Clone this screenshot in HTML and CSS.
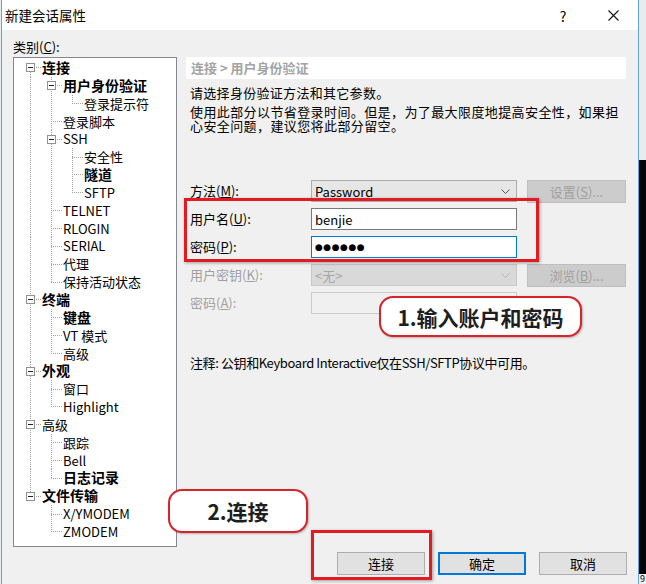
FILE: index.html
```html
<!DOCTYPE html>
<html lang="zh-CN">
<head>
    <meta charset="UTF-8">
    <title>新建会话属性</title>
    <link rel="stylesheet" href="styles.css">
</head>
<body>
<div class="screen">
    <div class="window">
        <div class="titlebar">
            <span class="title">新建会话属性</span>
            <span class="tb-btn">?</span>
            <span class="tb-btn">
                <svg width="11" height="11" viewBox="0 0 11 11"><path d="M0.5 0.5 L10.5 10.5 M10.5 0.5 L0.5 10.5" stroke="#111" stroke-width="1.1" fill="none"/></svg>
            </span>
        </div>

        <div class="body">
            <div class="main">
                <div class="left">
                    <div class="cat-label">类别(<u>C</u>):</div>
                    <div class="tree">
                        <div class="row"><i class="c first"><b class="pm"></b></i><span class="t b">连接</span></div>
                        <div class="row"><i class="c v"></i><i class="c mid"><b class="pm"></b></i><span class="t b">用户身份验证</span></div>
                        <div class="row"><i class="c v"></i><i class="c v"></i><i class="c end"></i><span class="t">登录提示符</span></div>
                        <div class="row"><i class="c v"></i><i class="c mid"></i><span class="t">登录脚本</span></div>
                        <div class="row"><i class="c v"></i><i class="c mid"><b class="pm"></b></i><span class="t">SSH</span></div>
                        <div class="row"><i class="c v"></i><i class="c v"></i><i class="c mid"></i><span class="t">安全性</span></div>
                        <div class="row"><i class="c v"></i><i class="c v"></i><i class="c mid"></i><span class="t b">隧道</span></div>
                        <div class="row"><i class="c v"></i><i class="c v"></i><i class="c end"></i><span class="t">SFTP</span></div>
                        <div class="row"><i class="c v"></i><i class="c mid"></i><span class="t">TELNET</span></div>
                        <div class="row"><i class="c v"></i><i class="c mid"></i><span class="t">RLOGIN</span></div>
                        <div class="row"><i class="c v"></i><i class="c mid"></i><span class="t">SERIAL</span></div>
                        <div class="row"><i class="c v"></i><i class="c mid"></i><span class="t">代理</span></div>
                        <div class="row"><i class="c v"></i><i class="c end"></i><span class="t">保持活动状态</span></div>
                        <div class="row"><i class="c mid"><b class="pm"></b></i><span class="t b">终端</span></div>
                        <div class="row"><i class="c v"></i><i class="c mid"></i><span class="t b">键盘</span></div>
                        <div class="row"><i class="c v"></i><i class="c mid"></i><span class="t">VT 模式</span></div>
                        <div class="row"><i class="c v"></i><i class="c end"></i><span class="t">高级</span></div>
                        <div class="row"><i class="c mid"><b class="pm"></b></i><span class="t b">外观</span></div>
                        <div class="row"><i class="c v"></i><i class="c mid"></i><span class="t">窗口</span></div>
                        <div class="row"><i class="c v"></i><i class="c end"></i><span class="t">Highlight</span></div>
                        <div class="row"><i class="c mid"><b class="pm"></b></i><span class="t">高级</span></div>
                        <div class="row"><i class="c v"></i><i class="c mid"></i><span class="t">跟踪</span></div>
                        <div class="row"><i class="c v"></i><i class="c mid"></i><span class="t">Bell</span></div>
                        <div class="row"><i class="c v"></i><i class="c end"></i><span class="t b">日志记录</span></div>
                        <div class="row"><i class="c end"><b class="pm"></b></i><span class="t b">文件传输</span></div>
                        <div class="row"><i class="c"></i><i class="c mid"></i><span class="t">X/YMODEM</span></div>
                        <div class="row"><i class="c"></i><i class="c end"></i><span class="t">ZMODEM</span></div>
                    </div>
                </div>

                <div class="right">
                    <div class="crumb">连接 &gt; 用户身份验证</div>
                    <p class="desc">请选择身份验证方法和其它参数。</p>
                    <p class="desc2">使用此部分以节省登录时间。但是，为了最大限度地提高安全性，如果担<br>心安全问题，建议您将此部分留空。</p>

                    <div class="form">
                        <label>方法(<u>M</u>):</label>
                        <div class="select">Password<svg width="9" height="5" viewBox="0 0 9 5"><path d="M0.5 0.5 L4.5 4.5 L8.5 0.5" stroke="#555" fill="none"/></svg></div>
                        <button class="btn-off">设置(<u>S</u>)...</button>

                        <label>用户名(<u>U</u>):</label>
                        <div class="input">benjie</div>
                        <span></span>

                        <label>密码(<u>P</u>):</label>
                        <div class="input focus"><span class="dots">●●●●●●</span></div>
                        <span></span>

                        <label class="off">用户密钥(<u>K</u>):</label>
                        <div class="select off">&lt;无&gt;<svg width="9" height="5" viewBox="0 0 9 5"><path d="M0.5 0.5 L4.5 4.5 L8.5 0.5" stroke="#b5b5b5" fill="none"/></svg></div>
                        <button class="btn-off">浏览(<u>B</u>)...</button>

                        <label class="off">密码(<u>A</u>):</label>
                        <div class="input off"></div>
                        <span></span>
                    </div>

                    <p class="note">注释: 公钥和Keyboard Interactive仅在SSH/SFTP协议中可用。</p>
                </div>
            </div>

            <div class="footer">
                <button class="btn">连接</button>
                <button class="btn default">确定</button>
                <button class="btn">取消</button>
            </div>
        </div>

        <!-- annotations drawn over the dialog -->
        <div class="mark mark-form"></div>
        <div class="callout callout-1">1.输入账户和密码</div>
        <div class="callout callout-2">2.连接</div>
        <div class="mark mark-connect"></div>
    </div>

    <div class="outside">
        <div class="o-top"></div>
        <div class="o-black"></div>
        <div class="o-bottom">9</div>
    </div>
</div>
</body>
</html>
```

FILE: styles.css
```css
/* 全体 */
html, body {
    margin: 0;
    padding: 0;
}
body {
    width: 646px;
    height: 584px;
    overflow: hidden;
    background-color: #e4ebf1;
    font-family: "Noto Sans CJK SC", sans-serif;
    font-size: 13px;
    color: #000;
}
.screen {
    display: flex;
    height: 584px;
    padding-left: 1px;
}

/* ダイアログ */
.window {
    position: relative;
    width: 636px;
    display: flex;
    flex-direction: column;
    border-left: 1px solid #5ea6dc;
    border-right: 1px solid #5ea6dc;
    background-color: #f0f0f0;
}
.titlebar {
    display: flex;
    align-items: center;
    height: 30px;
    flex: none;
    background-color: #ffffff;
}
.title {
    padding-left: 3px;
    font-size: 13.5px;
    margin-right: auto;
}
.tb-btn {
    width: 50px;
    height: 30px;
    display: flex;
    align-items: center;
    justify-content: center;
    font-size: 14px;
    padding-top: 1px;
    box-sizing: border-box;
}

.body {
    flex: 1;
    display: flex;
    flex-direction: column;
}
.main {
    display: flex;
    gap: 9px;
    padding: 8px 12px 0 11px;
}

/* 左：カテゴリツリー */
.left {
    width: 164px;
    flex: none;
}
.cat-label {
    height: 19px;
    line-height: 17px;
}
.tree {
    height: 490px;
    box-sizing: border-box;
    border: 1px solid #828790;
    background-color: #ffffff;
    padding: 1px 0 0 6px;
    --dot-v: repeating-linear-gradient(to bottom, #a0a0a0 0 1px, transparent 1px 2px);
    --dot-h: repeating-linear-gradient(to right, #a0a0a0 0 1px, transparent 1px 2px);
}
.row {
    display: flex;
    align-items: center;
    height: 17.85px;
    line-height: 17.85px;
    white-space: nowrap;
}
.c {
    width: 21px;
    flex: none;
    align-self: stretch;
    display: flex;
    align-items: center;
    justify-content: center;
}
.c.v {
    background: var(--dot-v) 10px 0 / 1px 100% no-repeat;
}
.c.mid {
    background: var(--dot-h) 10px 50% / 11px 1px no-repeat,
                var(--dot-v) 10px 0 / 1px 100% no-repeat;
}
.c.end {
    background: var(--dot-h) 10px 50% / 11px 1px no-repeat,
                var(--dot-v) 10px 0 / 1px 50% no-repeat;
}
.c.first {
    background: var(--dot-h) 10px 50% / 11px 1px no-repeat,
                var(--dot-v) 10px 100% / 1px 50% no-repeat;
}
.pm {
    width: 9px;
    height: 9px;
    box-sizing: border-box;
    border: 1px solid #919191;
    background: linear-gradient(#222, #222) center / 5px 1px no-repeat, #ffffff;
}
.t {
    margin-left: 1px;
}
.t.b {
    font-weight: bold;
    font-size: 14px;
}

/* 右：設定パネル */
.right {
    width: 440px;
    flex: none;
}
.crumb {
    margin-top: 19px;
    height: 22px;
    line-height: 22px;
    padding-left: 5px;
    background-color: #ffffff;
    color: #a3a3a3;
    font-weight: bold;
}
.desc {
    margin: 6px 0 0;
    padding-left: 4px;
    line-height: 16px;
    letter-spacing: 0.3px;
}
.desc2 {
    margin: 4px 0 0;
    padding-left: 4px;
    line-height: 14px;
    letter-spacing: 0.4px;
}
.form {
    margin-top: 47px;
    padding-left: 4px;
    display: grid;
    grid-template-columns: 111px 206px 99px;
    column-gap: 10px;
    row-gap: 6px;
    grid-auto-rows: 22px;
    align-items: center;
}
.form label {
    line-height: 16px;
}
.form label.off {
    color: #a0a0a0;
}
.select, .input {
    height: 22px;
    box-sizing: border-box;
    display: flex;
    align-items: center;
    padding-left: 3px;
}
.select {
    justify-content: space-between;
    padding-right: 6px;
    border: 1px solid #acacac;
    background-color: #e6e6e6;
}
.select.off {
    border-color: #c8c8c8;
    background-color: #d9d9d9;
    color: #a6a6a6;
}
.input {
    border: 1px solid #7a7a7a;
    background-color: #ffffff;
}
.input.focus {
    border-color: #0078d7;
}
.input.off {
    border-color: #cccccc;
    background-color: #f0f0f0;
}
.dots {
    font-family: "DejaVu Sans", sans-serif;
    font-size: 9px;
    letter-spacing: 0.5px;
}
.btn-off {
    height: 23px;
    align-self: start;
    font-family: inherit;
    font-size: 13px;
    color: #a0a0a0;
    background-color: #cccccc;
    border: 1px solid #bfbfbf;
    padding: 0;
}
.note {
    margin: 41px 0 0;
    padding-left: 4px;
    line-height: 16px;
    letter-spacing: -0.4px;
}

/* 下部ボタン */
.footer {
    display: flex;
    justify-content: flex-end;
    gap: 13px;
    padding: 5px 11px 0 0;
}
.btn {
    width: 88px;
    height: 23px;
    box-sizing: border-box;
    font-family: inherit;
    font-size: 13px;
    color: #000;
    background-color: #e1e1e1;
    border: 1px solid #adadad;
    padding: 0;
}
.btn.default {
    border: 2px solid #0078d7;
}

/* 注釈（赤枠と吹き出し） */
.mark {
    position: absolute;
    box-sizing: border-box;
    border: 3px solid #e11b22;
    box-shadow: 1px 1px 3px rgba(0, 0, 0, 0.35);
}
.mark-form {
    left: 182px;
    top: 198px;
    width: 355px;
    height: 64px;
}
.mark-connect {
    left: 309px;
    top: 530px;
    width: 121px;
    height: 50px;
}
.callout {
    position: absolute;
    box-sizing: border-box;
    display: flex;
    align-items: center;
    justify-content: center;
    background-color: #ffffff;
    border: 2px solid #d8232a;
    border-radius: 14px;
    box-shadow: 1px 1px 2px rgba(0, 0, 0, 0.25);
    font-size: 21px;
    font-weight: bold;
    color: #1e1e1e;
}
.callout-1 {
    left: 377px;
    top: 296px;
    width: 203px;
    height: 41px;
}
.callout-2 {
    left: 166px;
    top: 489px;
    width: 140px;
    height: 44px;
}

/* ウィンドウ外 */
.outside {
    width: 7px;
    display: flex;
    flex-direction: column;
}
.o-top {
    height: 160px;
    background-color: #ebebeb;
}
.o-black {
    flex: 1;
    background-color: #060606;
}
.o-bottom {
    height: 10px;
    background-color: #f0f0f0;
    font-size: 9px;
    line-height: 10px;
    padding-left: 1px;
}
```
